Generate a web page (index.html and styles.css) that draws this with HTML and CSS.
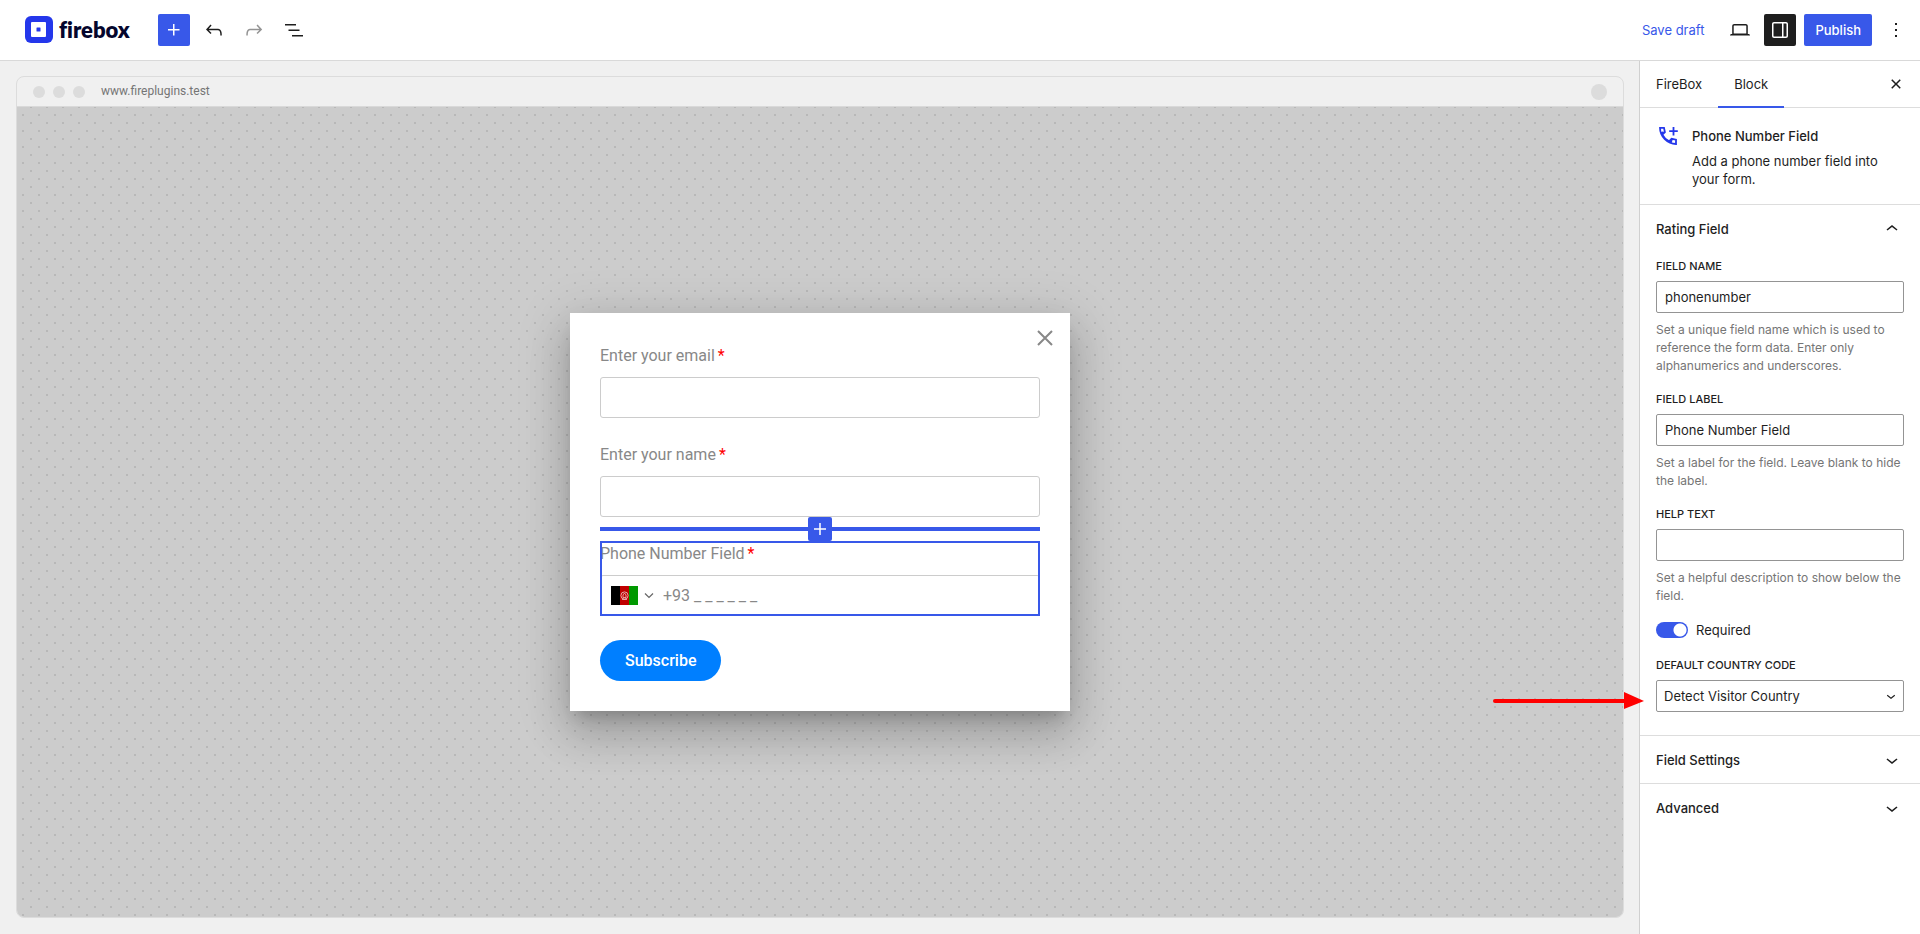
FILE: index.html
```html
<!DOCTYPE html>
<html lang="en">
<head>
  <meta charset="UTF-8">
  <meta name="viewport" content="width=device-width, initial-scale=1">
  <title>FireBox</title>
  <link rel="stylesheet" href="styles.css">
</head>
<body>

  <header class="topbar">
    <a href="#" class="logo">
      <svg width="28" height="28" viewBox="0 0 28 28">
        <rect width="28" height="27" rx="6" fill="#2437eb"/>
        <rect x="6" y="6" width="15" height="15" rx="1" fill="#fff"/>
        <rect x="11.5" y="11.5" width="4" height="4" rx=".5" fill="#2437eb"/>
      </svg>
      <span>firebox</span>
    </a>

    <div class="tools">
      <button class="icon-btn primary" aria-label="Add block">
        <svg width="24" height="24" viewBox="0 0 24 24"><path d="M11 12.5V17.5H12.5V12.5H17.5V11H12.5V6H11V11H6V12.5H11Z"/></svg>
      </button>
      <button class="icon-btn" aria-label="Undo">
        <svg width="24" height="24" viewBox="0 0 24 24"><path d="M18.3 11.7c-.6-.6-1.4-.9-2.3-.9H6.7l2.9-3.3-1.1-1-4.5 5L8.5 16l1-1-2.7-2.7H16c.5 0 .9.2 1.3.5 1 1 1 3.4 1 4.5v.3h1.5v-.2c0-1.5 0-4.3-1.5-5.7z"/></svg>
      </button>
      <button class="icon-btn" aria-label="Redo" disabled>
        <svg width="24" height="24" viewBox="0 0 24 24"><path d="M15.6 6.5l-1.1 1 2.9 3.3H8c-.9 0-1.7.3-2.3.9-1.4 1.5-1.4 4.2-1.4 5.6v.2h1.5v-.3c0-1.1 0-3.5 1-4.5.3-.3.7-.5 1.3-.5h9.2L14.5 15l1.1 1.1 4.6-4.6-4.6-5z"/></svg>
      </button>
      <button class="icon-btn" aria-label="Document overview">
        <svg width="24" height="24" viewBox="0 0 24 24"><path d="M3 6h11v1.5H3V6Zm3.5 5.5h11V13h-11v-1.5ZM21 17H10v1.5h11V17Z"/></svg>
      </button>
    </div>

    <div class="actions">
      <button class="link-btn">Save draft</button>
      <button class="icon-btn" aria-label="Preview">
        <svg width="24" height="24" viewBox="0 0 24 24"><path d="M20.5 16h-.7V8c0-1.1-.9-2-2-2H6.2c-1.1 0-2 .9-2 2v8h-.7c-.8 0-1.5.7-1.5 1.5h20c0-.8-.7-1.5-1.5-1.5zM5.7 8c0-.3.2-.5.5-.5h11.6c.3 0 .5.2.5.5v7.6H5.7V8z"/></svg>
      </button>
      <button class="icon-btn dark" aria-label="Settings">
        <svg width="24" height="24" viewBox="0 0 24 24"><path fill-rule="evenodd" d="M18 4H6c-1.1 0-2 .9-2 2v12c0 1.1.9 2 2 2h12c1.1 0 2-.9 2-2V6c0-1.1-.9-2-2-2zm-4 14.5H6c-.3 0-.5-.2-.5-.5V6c0-.3.2-.5.5-.5h8v13zm4.500-.5c0 .3-.2.5-.5.5h-2.500v-13H18c.3 0 .5.2.5.5v12z"/></svg>
      </button>
      <button class="publish">Publish</button>
      <button class="icon-btn more" aria-label="Options">
        <svg width="24" height="24" viewBox="0 0 24 24"><path d="M13 19h-2v-2h2v2zm0-6h-2v-2h2v2zm0-6h-2V5h2v2z"/></svg>
      </button>
    </div>
  </header>

  <div class="editor">
    <main class="canvas">
      <div class="browser">
        <div class="browser-bar">
          <span class="dot"></span>
          <span class="dot"></span>
          <span class="dot"></span>
          <span class="url">www.fireplugins.test</span>
          <span class="dot avatar"></span>
        </div>

        <div class="stage">
          <form class="popup">
            <button type="button" class="popup-close" aria-label="Close">
              <svg width="16" height="16" viewBox="0 0 16 16"><path d="M1 1l14 14M15 1L1 15" fill="none" stroke="#888" stroke-width="2"/></svg>
            </button>

            <div class="field">
              <label for="email">Enter your email<span class="req">*</span></label>
              <input type="email" id="email">
            </div>

            <div class="field">
              <label for="name">Enter your name<span class="req">*</span></label>
              <input type="text" id="name">
            </div>

            <div class="field selected">
              <div class="inserter">
                <button type="button" aria-label="Add block">
                  <svg width="24" height="24" viewBox="0 0 24 24"><path d="M11.25 12.75V18H12.75V12.75H18V11.25H12.75V6H11.25V11.25H6V12.75H11.25Z"/></svg>
                </button>
              </div>
              <label for="phone">Phone Number Field<span class="req">*</span></label>
              <div class="phone">
                <button type="button" class="country" aria-label="Country">
                  <svg width="27" height="19" viewBox="0 0 27 19">
                    <rect width="9" height="19" fill="#000"/>
                    <rect x="9" width="9" height="19" fill="#bf0000"/>
                    <rect x="18" width="9" height="19" fill="#009900"/>
                    <circle cx="13.5" cy="9.5" r="3.6" fill="none" stroke="#e6a5a5" stroke-width="1"/>
                    <path d="M12 11.5V9l1.5-2L15 9v2.5zM11 13.5h5" fill="none" stroke="#eebcbc" stroke-width=".8"/>
                  </svg>
                  <svg width="10" height="6" viewBox="0 0 10 6"><path d="M1 .5l4 4 4-4" fill="none" stroke="#666" stroke-width="1.2"/></svg>
                </button>
                <input type="tel" id="phone" placeholder="+93 _ _ _ _ _ _">
              </div>
            </div>

            <button type="button" class="subscribe">Subscribe</button>
          </form>
        </div>
      </div>
    </main>

    <aside class="sidebar">
      <div class="tabs">
        <button class="tab">FireBox</button>
        <button class="tab active">Block</button>
        <button class="tabs-close" aria-label="Close settings">
          <svg width="24" height="24" viewBox="0 0 24 24"><path d="M12 13.06l3.712 3.713 1.061-1.06L13.061 12l3.712-3.712-1.06-1.06L12 10.938 8.288 7.227l-1.061 1.06L10.939 12l-3.712 3.712 1.06 1.061L12 13.061z"/></svg>
        </button>
      </div>

      <div class="block-card">
        <svg width="24" height="24" viewBox="0 0 24 24" fill="none" stroke="#2437eb" stroke-width="1.8">
          <path d="M4 3.800h4l.9 4.300-2.600 2.500c1.500 2.900 3.900 5.300 6.800 6.800l2.500-2.600 4.400.9v4.300C11.500 20 4 12.500 4 3.800zM4.600 9.300l3-1.200M14.600 19l1.200-3"/>
          <path d="M17.5 3v8.500M13.200 7.200h8.600"/>
        </svg>
        <div>
          <h2>Phone Number Field</h2>
          <p>Add a phone number field into your form.</p>
        </div>
      </div>

      <section class="panel">
        <button class="panel-title" aria-expanded="true">Rating Field
          <svg width="24" height="24" viewBox="0 0 24 24"><path d="M6.500 12.400L12 8l5.500 4.400-.9 1.200L12 10l-4.500 3.600-1-1.200z"/></svg>
        </button>
        <div class="panel-body">
          <div class="control">
            <label for="field-name">Field Name</label>
            <input type="text" id="field-name" value="phonenumber">
            <p>Set a unique field name which is used to reference the form data. Enter only alphanumerics and underscores.</p>
          </div>
          <div class="control">
            <label for="field-label">Field Label</label>
            <input type="text" id="field-label" value="Phone Number Field">
            <p>Set a label for the field. Leave blank to hide the label.</p>
          </div>
          <div class="control">
            <label for="help-text">Help Text</label>
            <input type="text" id="help-text">
            <p>Set a helpful description to show below the field.</p>
          </div>
          <div class="toggle">
            <input type="checkbox" id="required" checked>
            <label for="required">Required</label>
          </div>
          <div class="control">
            <label for="country">Default Country Code</label>
            <div class="select">
              <select id="country">
                <option>Detect Visitor Country</option>
              </select>
              <svg width="18" height="18" viewBox="0 0 24 24"><path d="M17.5 11.6L12 16l-5.500-4.400.9-1.200L12 14l4.500-3.600 1 1.200z"/></svg>
            </div>
            <!-- callout arrow -->
            <svg class="arrow" width="151" height="18" viewBox="0 0 151 18"><path d="M2 9H134" stroke="#f00" stroke-width="4" stroke-linecap="round"/><path d="M131 0l20 9-20 8z" fill="#f00"/></svg>
          </div>
        </div>
      </section>

      <section class="panel">
        <button class="panel-title">Field Settings
          <svg width="24" height="24" viewBox="0 0 24 24"><path d="M17.5 11.6L12 16l-5.500-4.400.9-1.200L12 14l4.500-3.600 1 1.200z"/></svg>
        </button>
      </section>
      <section class="panel">
        <button class="panel-title">Advanced
          <svg width="24" height="24" viewBox="0 0 24 24"><path d="M17.5 11.6L12 16l-5.500-4.400.9-1.200L12 14l4.500-3.600 1 1.200z"/></svg>
        </button>
      </section>
    </aside>
  </div>

</body>
</html>
```
FILE: styles.css
```css
* {
    box-sizing: border-box;
}
body {
    margin: 0;
    height: 100vh;
    display: flex;
    flex-direction: column;
    font-family: Inter, "Liberation Sans", sans-serif;
    font-size: 13px;
    line-height: 18px;
    color: #1e1e1e;
    background: #fff;
}
button, input, select {
    font: inherit;
    color: inherit;
}
button {
    padding: 0;
    border: 0;
    background: none;
    cursor: pointer;
}
svg {
    display: block;
    flex: none;
}
button svg, .select svg {
    fill: currentColor;
}
h2, p {
    margin: 0;
}

/* top bar */
.topbar {
    display: flex;
    align-items: center;
    height: 61px;
    flex: none;
    padding: 0 8px 0 25px;
    border-bottom: 1px solid #d9d9d9;
}
.logo {
    display: flex;
    align-items: center;
    gap: 6px;
    width: 133px;
    font-family: Lato, sans-serif;
    font-size: 22px;
    font-weight: 800;
    font-variant-ligatures: none;
    line-height: 28px;
    color: #05062d;
    text-decoration: none;
}
.tools {
    display: flex;
    gap: 8px;
}
.icon-btn {
    display: flex;
    align-items: center;
    justify-content: center;
    width: 32px;
    height: 32px;
    border-radius: 2px;
}
.icon-btn:disabled {
    color: #949494;
}
.icon-btn.primary {
    color: #fff;
    background: #3858e9;
}
.icon-btn.dark {
    color: #fff;
    background: #1e1e1e;
}
.actions {
    display: flex;
    align-items: center;
    gap: 8px;
    margin-left: auto;
}
.link-btn {
    padding: 0 12px;
    color: #3858e9;
}
.publish {
    height: 32px;
    padding: 0 11px;
    border-radius: 2px;
    font-weight: 500;
    color: #fff;
    background: #3858e9;
}

/* canvas */
.editor {
    display: flex;
    flex: 1;
    min-height: 0;
}
.canvas {
    flex: 1;
    padding: 15px 15px 16px 16px;
    background: #f0f0f0;
}
.browser {
    display: flex;
    flex-direction: column;
    height: 100%;
    border: 1px solid #dcdcdc;
    border-radius: 8px;
    overflow: hidden;
    font-family: Roboto, sans-serif;
}
.browser-bar {
    display: flex;
    align-items: center;
    gap: 8px;
    height: 30px;
    padding: 0 16px;
    border-bottom: 1px solid #d9d9d9;
}
.dot {
    width: 12px;
    height: 12px;
    border-radius: 50%;
    background: #dcdcdc;
}
.dot.avatar {
    width: 16px;
    height: 16px;
    margin-left: auto;
}
.url {
    margin-left: 8px;
    padding-bottom: 2px;
    font-size: 12px;
    color: #757575;
}
.stage {
    display: flex;
    align-items: center;
    justify-content: center;
    flex: 1;
    background-color: #ccc;
    background-image: radial-gradient(circle, #b8b8b8 1px, transparent 1px), radial-gradient(circle, #b8b8b8 1px, transparent 1px);
    background-size: 16px 16px;
    background-position: -2px 0, 6px 8px;
}

/* popup */
.popup {
    position: relative;
    display: flex;
    flex-direction: column;
    align-items: flex-start;
    gap: 24px;
    width: 500px;
    padding: 30px;
    background: #fff;
    box-shadow: 0 11px 15px -7px rgba(0, 0, 0, .2), 0 24px 38px 3px rgba(0, 0, 0, .14), 0 9px 46px 8px rgba(0, 0, 0, .12);
    font-size: 16px;
    line-height: 26px;
    color: #888;
}
.popup-close {
    position: absolute;
    top: 17px;
    right: 17px;
}
.field {
    position: relative;
    display: flex;
    flex-direction: column;
    gap: 8px;
    width: 100%;
}
.req {
    margin-left: 3px;
    color: #f00;
}
.field input {
    width: 100%;
    height: 41px;
    padding: 0 12px;
    border: 1px solid #ccc;
    border-radius: 3px;
    background: #fff;
}
.field.selected::after {
    content: "";
    position: absolute;
    inset: 0;
    border: 2px solid #3858e9;
    pointer-events: none;
}
.inserter {
    position: absolute;
    top: -24px;
    left: 0;
    right: 0;
    display: flex;
    justify-content: center;
    background: linear-gradient(#3858e9, #3858e9) center / 100% 4px no-repeat;
}
.inserter button {
    border-radius: 2px;
    color: #fff;
    background: #3858e9;
}
.phone {
    display: flex;
    height: 41px;
    border: 1px solid #ccc;
    border-radius: 3px;
}
.country {
    display: flex;
    align-items: center;
    gap: 6px;
    padding: 0 9px 0 10px;
}
.phone input {
    flex: 1;
    height: 39px;
    padding: 0;
    border: 0;
}
.phone input::placeholder {
    color: #888;
}
.subscribe {
    height: 41px;
    padding: 0 25px;
    border-radius: 21px;
    font-weight: 500;
    color: #fff;
    background: #007fff;
}

/* sidebar */
.sidebar {
    width: 281px;
    flex: none;
    border-left: 1px solid #d0d0d0;
}
.tabs {
    display: flex;
    height: 47px;
    border-bottom: 1px solid #ddd;
}
.tab {
    padding: 0 16px 2px;
    margin-bottom: -1px;
}
.tab.active {
    box-shadow: inset 0 -2px #3858e9;
}
.tabs-close {
    margin-left: auto;
    padding-right: 12px;
}
.block-card {
    display: flex;
    gap: 12px;
    padding: 16px;
}
.block-card h2 {
    margin: 3px 0 7px;
    font-size: 13px;
    font-weight: 500;
    line-height: 18px;
}
.panel {
    border-top: 1px solid #ddd;
}
.panel-title {
    display: flex;
    align-items: center;
    justify-content: space-between;
    width: 100%;
    height: 47px;
    padding: 0 16px;
    font-weight: 500;
}
.panel-body {
    display: flex;
    flex-direction: column;
    gap: 15px;
    padding: 5px 16px 23px;
}
.control {
    position: relative;
}
.control label {
    display: block;
    margin-bottom: 6px;
    font-size: 11px;
    font-weight: 500;
    text-transform: uppercase;
}
.control input, .control select {
    display: block;
    width: 100%;
    height: 32px;
    padding: 0 8px;
    border: 1px solid #949494;
    border-radius: 2px;
    background: #fff;
}
.control select {
    padding: 0 7px;
    appearance: none;
}
.control p {
    margin-top: 8px;
    font-size: 12px;
    color: #757575;
}
.select {
    position: relative;
}
.select svg {
    position: absolute;
    top: 7px;
    right: 4px;
    pointer-events: none;
}
.toggle {
    display: flex;
    align-items: center;
    gap: 8px;
    padding: 1px 0 2px;
}
.toggle input {
    appearance: none;
    width: 32px;
    height: 16px;
    margin: 0;
    border-radius: 8px;
    background: radial-gradient(circle at 24px 8px, #fff 6px, #3858e9 7px);
}
.arrow {
    position: absolute;
    right: 260px;
    bottom: 2px;
}
```
